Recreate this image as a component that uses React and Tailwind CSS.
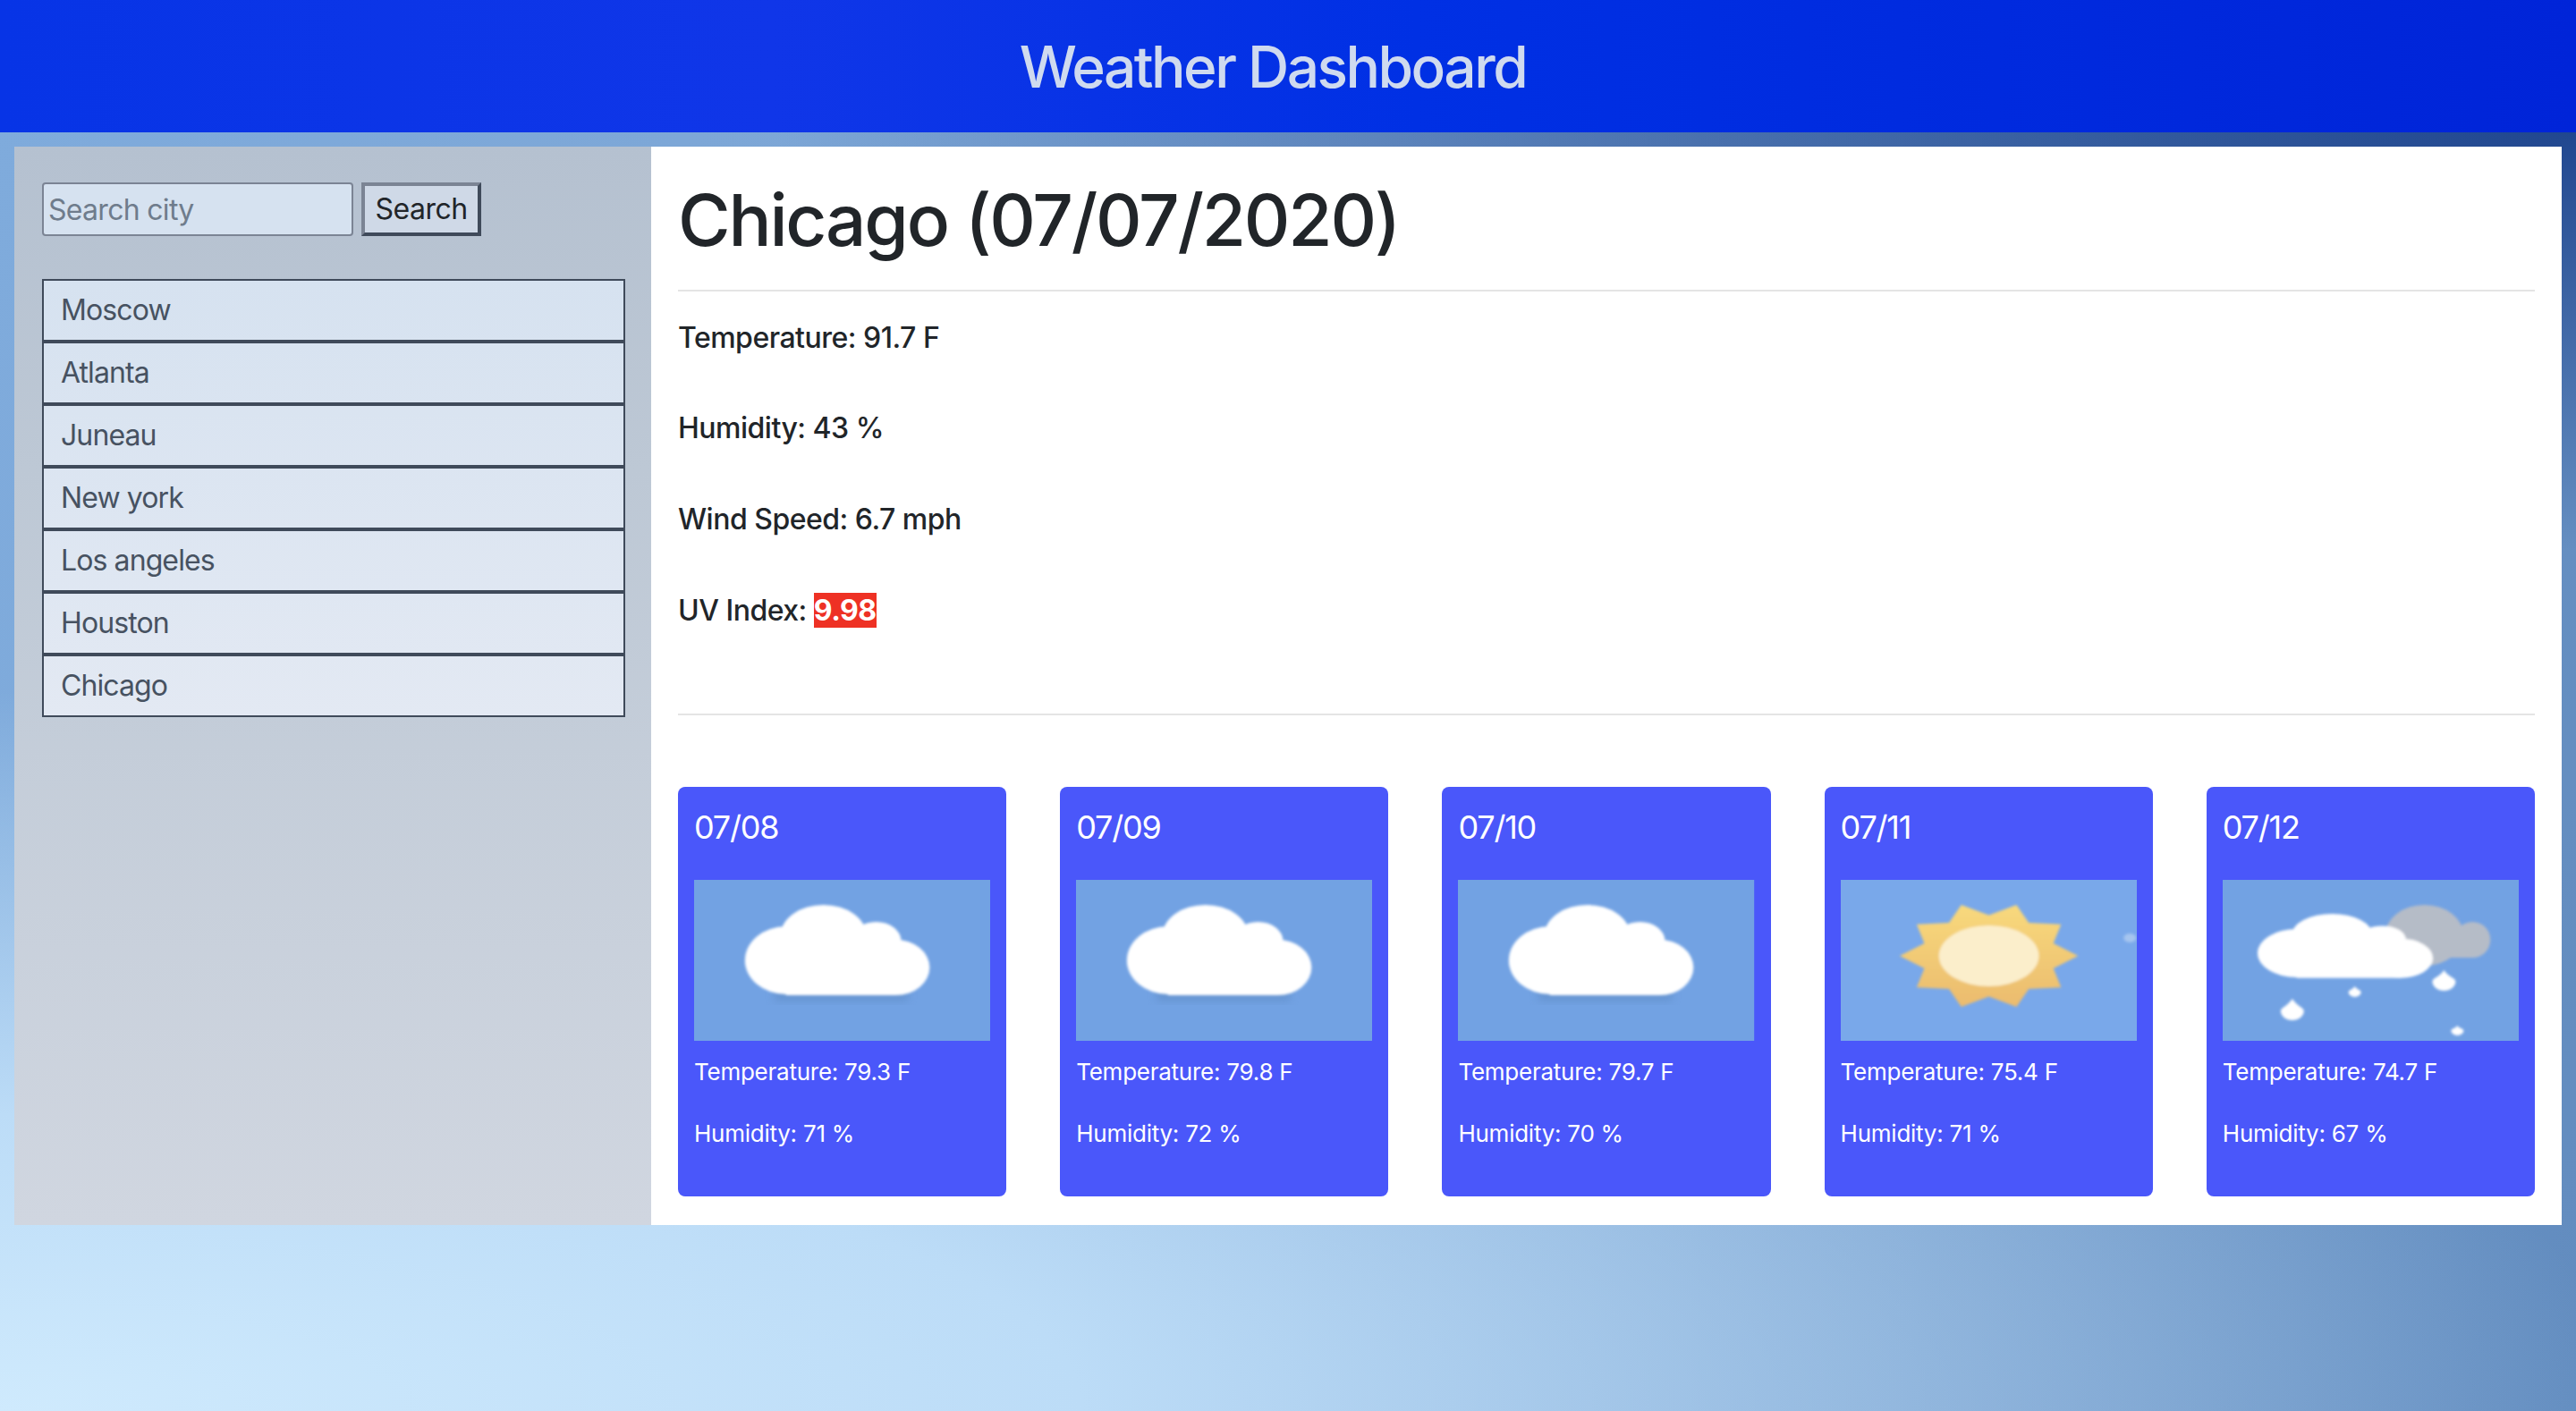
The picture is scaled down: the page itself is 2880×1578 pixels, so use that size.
import React from 'react';

const cities = ['Moscow', 'Atlanta', 'Juneau', 'New york', 'Los angeles', 'Houston', 'Chicago'];

const forecast = [
    { date: '07/08', icon: 'cloud', temp: '79.3', humidity: '71' },
    { date: '07/09', icon: 'cloud', temp: '79.8', humidity: '72' },
    { date: '07/10', icon: 'cloud', temp: '79.7', humidity: '70' },
    { date: '07/11', icon: 'sun', temp: '75.4', humidity: '71' },
    { date: '07/12', icon: 'rain', temp: '74.7', humidity: '67' },
];

// 10 pointed star, squashed like the stretched weather image
const sunPoints = Array.from({ length: 20 }, (_, i) => {
    const angle = (i * 18 * Math.PI) / 180;
    const r = i % 2 === 0 ? 1 : 0.76;
    return `${(166 + Math.cos(angle) * 100 * r).toFixed(1)},${(85 + Math.sin(angle) * 60 * r).toFixed(1)}`;
}).join(' ');

const Drop = ({ x, top, bottom, r }) => (
    <path
        d={`M${x} ${top} C${x + r * 0.4} ${top + (bottom - top) * 0.35} ${x + r} ${bottom - r * 1.1} ${x + r} ${bottom - r * 0.8} A${r} ${r * 0.8} 0 0 1 ${x - r} ${bottom - r * 0.8} C${x - r} ${bottom - r * 1.1} ${x - r * 0.4} ${top + (bottom - top) * 0.35} ${x} ${top} Z`}
        fill="#fff"
    />
);

const CloudShape = ({ transform }) => (
    <g fill="#fff" transform={transform}>
        <ellipse cx="103" cy="90" rx="46" ry="38" />
        <ellipse cx="145" cy="62" rx="48" ry="34" />
        <ellipse cx="204" cy="68" rx="28" ry="21" />
        <ellipse cx="226" cy="98" rx="38" ry="31" />
        <rect x="103" y="70" width="123" height="59" />
    </g>
);

const WeatherIcon = ({ icon }) => (
    <svg viewBox="0 0 332 180" preserveAspectRatio="none" className="block w-full h-[180px]">
        <defs>
            <filter id="soft" x="-10%" y="-10%" width="120%" height="120%">
                <feGaussianBlur stdDeviation="1.8" />
            </filter>
            <filter id="shade" x="-20%" y="-20%" width="140%" height="140%">
                <feGaussianBlur stdDeviation="5" />
            </filter>
            <linearGradient id="sunFill" x1="0" y1="0" x2="0" y2="1">
                <stop offset="0" stopColor="#f8d97c" />
                <stop offset="1" stopColor="#ebbb6e" />
            </linearGradient>
        </defs>
        <rect width="332" height="180" fill={icon === 'sun' ? '#79a8ea' : '#72a2e3'} />
        {icon === 'cloud' && (
            <>
                <rect x="90" y="118" width="150" height="18" fill="#5f8cc6" opacity="0.6" filter="url(#shade)" />
                <g filter="url(#soft)">
                    <CloudShape />
                </g>
            </>
        )}
        {icon === 'sun' && (
            <g filter="url(#soft)">
                <polygon points={sunPoints} fill="url(#sunFill)" />
                <ellipse cx="166" cy="85" rx="56" ry="34" fill="#fbeecb" />
                <ellipse cx="324" cy="65" rx="7" ry="5" fill="#a5c5ef" />
            </g>
        )}
        {icon === 'rain' && (
            <g filter="url(#soft)">
                <g fill="#b5bcc7">
                    <ellipse cx="226" cy="62" rx="44" ry="34" />
                    <ellipse cx="280" cy="67" rx="20" ry="20" />
                    <rect x="190" y="62" width="90" height="25" />
                </g>
                <CloudShape transform="translate(39 38) scale(0.95 0.71) translate(-57 -28)" />
                <Drop x={248} top={101} bottom={124} r={13} />
                <Drop x={78} top={133} bottom={157} r={13} />
                <Drop x={148} top={119} bottom={131} r={7} />
                <Drop x={263} top={163} bottom={174} r={7} />
            </g>
        )}
    </svg>
);

const ForecastCard = ({ date, icon, temp, humidity }) => (
    <div className="flex-1 h-[458px] bg-[#4a57fa] rounded-lg px-[18px] pt-[21px] text-white">
        <h5 className="text-[36px] leading-[48px] tracking-[-1.2px]">{date}</h5>
        <div className="mt-[35px]">
            <WeatherIcon icon={icon} />
        </div>
        <p className="mt-[15px] text-[26px] leading-[40px] tracking-[-0.25px]">Temperature: {temp} F</p>
        <p className="mt-[29px] text-[26px] leading-[40px] tracking-[-0.25px]">Humidity: {humidity} %</p>
    </div>
);

export default function App() {
    return (
        <div className="min-h-screen h-[1578px] overflow-hidden [font-family:Inter,sans-serif] bg-[radial-gradient(70%_30%_at_100%_9%,rgba(28,66,140,0.95)_0%,rgba(28,66,140,0)_100%),radial-gradient(120%_60%_at_0%_100%,#cfeafd_0%,#bcdcf7_35%,rgba(188,220,247,0)_85%),linear-gradient(100deg,#7fabdc_0%,#7ba3d2_50%,#628cbf_100%)]">
            <header className="h-[148px] flex items-center justify-center pr-[34px] pt-[2px] bg-[linear-gradient(90deg,#0734e6_0%,#1036e8_30%,#0030e4_55%,#0024d8_100%)]">
                <h1 className="text-[64px] font-medium tracking-[-2.5px] text-[#cfdaef]">Weather Dashboard</h1>
            </header>

            <div className="flex mx-4 mt-4 h-[1206px]">
                <aside className="w-[712px] pl-[31px] pt-10 bg-[linear-gradient(180deg,#b5c1d0_0%,#bdc8d5_30%,#d0d6e0_100%)]">
                    <form className="flex gap-[9px]">
                        <input
                            type="text"
                            placeholder="Search city"
                            className="w-[348px] h-[60px] px-[5px] text-[32px] tracking-[-0.7px] bg-[#d6e2f0] text-[#212529] placeholder:text-[#6f7c8c] border-2 border-[#7b8494] rounded-[4px] outline-none"
                        />
                        <button
                            type="button"
                            className="w-[134px] h-[60px] text-[32px] tracking-[-0.5px] text-[#212529] bg-[#cfd9e7] border-4 border-t-[#7b8494] border-l-[#7b8494] border-b-[#3f4a5a] border-r-[#3f4a5a]"
                        >
                            Search
                        </button>
                    </form>

                    <ul className="mt-12 w-[652px] bg-[linear-gradient(180deg,#d6e2f0_0%,#e3e9f3_100%)]">
                        {cities.map((city) => (
                            <li
                                key={city}
                                className="h-[70px] flex items-center pl-[19px] text-[32px] tracking-[-0.9px] text-[#475261] border-2 border-[#3f4a5a]"
                            >
                                {city}
                            </li>
                        ))}
                    </ul>
                </aside>

                <main className="flex-1 bg-white px-[30px] pt-[34px] text-[#212529]">
                    <h1 className="text-[80px] leading-[96px] font-medium tracking-[-2.2px]">Chicago (07/07/2020)</h1>
                    <hr className="mt-[30px] border-t-2 border-[#e4e4e4]" />
                    <div className="mt-[28px] text-[32px] leading-[48px] font-medium tracking-[-0.5px]">
                        <p className="mb-[53px]">Temperature: 91.7 F</p>
                        <p className="mb-[54px]">Humidity: 43 %</p>
                        <p className="mb-[54px]">Wind Speed: 6.7 mph</p>
                        <p>
                            UV Index: <span className="bg-[#ee3124] text-white font-bold">9.98</span>
                        </p>
                    </div>
                    <hr className="mt-[91px] border-t-2 border-[#e4e4e4]" />
                    <div className="mt-[80px] flex gap-[60px]">
                        {forecast.map((day) => (
                            <ForecastCard key={day.date} {...day} />
                        ))}
                    </div>
                </main>
            </div>
        </div>
    );
}
